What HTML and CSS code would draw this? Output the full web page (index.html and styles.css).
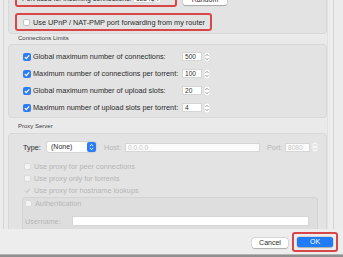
FILE: index.html
```html
<!DOCTYPE html>
<html lang="en">
<head>
    <meta charset="UTF-8">
    <meta name="viewport" content="width=device-width, initial-scale=1.0">
    <title>Preferences - Connection</title>
    <link rel="stylesheet" href="styles.css">
</head>
<body>
    <div class="window">
        <div class="scroll">
            <div class="content">
                <div class="group group-top">
                    <div class="port-row">
                        <div class="mark port-mark">
                            <span class="port-label">Port used for incoming connections:</span>
                            <span class="field port-field">12345</span>
                            <svg class="spin" viewBox="0 0 6 10"><rect x="0.25" y="0.25" width="5.5" height="9.5" rx="2" fill="#fff" stroke="#d2d2d2" stroke-width="0.5"/><path d="M1.6 3.8 L3 2.4 L4.4 3.8 M1.6 6.2 L3 7.6 L4.4 6.2" fill="none" stroke="#6f6f6f" stroke-width="0.8"/></svg>
                        </div>
                        <button class="btn random">Random</button>
                    </div>
                    <div class="mark upnp-mark">
                        <span class="check"></span>
                        <span class="text">Use UPnP / NAT-PMP port forwarding from my router</span>
                    </div>
                </div>

                <div class="section-title limits-title">Connections Limits</div>
                <div class="group limits">
                    <div class="row">
                        <span class="check on"><svg viewBox="0 0 7 7"><path d="M1.6 3.6 L2.9 4.9 L5.4 2" fill="none" stroke="#fff" stroke-width="1.1"/></svg></span>
                        <span class="text limit-label">Global maximum number of connections:</span>
                        <span class="field">500</span>
                        <svg class="spin" viewBox="0 0 6 10"><rect x="0.25" y="0.25" width="5.5" height="9.5" rx="2" fill="#fff" stroke="#d2d2d2" stroke-width="0.5"/><path d="M1.6 3.8 L3 2.4 L4.4 3.8 M1.6 6.2 L3 7.6 L4.4 6.2" fill="none" stroke="#6f6f6f" stroke-width="0.8"/></svg>
                    </div>
                    <div class="row">
                        <span class="check on"><svg viewBox="0 0 7 7"><path d="M1.6 3.6 L2.9 4.9 L5.4 2" fill="none" stroke="#fff" stroke-width="1.1"/></svg></span>
                        <span class="text limit-label">Maximum number of connections per torrent:</span>
                        <span class="field">100</span>
                        <svg class="spin" viewBox="0 0 6 10"><rect x="0.25" y="0.25" width="5.5" height="9.5" rx="2" fill="#fff" stroke="#d2d2d2" stroke-width="0.5"/><path d="M1.6 3.8 L3 2.4 L4.4 3.8 M1.6 6.2 L3 7.6 L4.4 6.2" fill="none" stroke="#6f6f6f" stroke-width="0.8"/></svg>
                    </div>
                    <div class="row">
                        <span class="check on"><svg viewBox="0 0 7 7"><path d="M1.6 3.6 L2.9 4.9 L5.4 2" fill="none" stroke="#fff" stroke-width="1.1"/></svg></span>
                        <span class="text limit-label">Global maximum number of upload slots:</span>
                        <span class="field">20</span>
                        <svg class="spin" viewBox="0 0 6 10"><rect x="0.25" y="0.25" width="5.5" height="9.5" rx="2" fill="#fff" stroke="#d2d2d2" stroke-width="0.5"/><path d="M1.6 3.8 L3 2.4 L4.4 3.8 M1.6 6.2 L3 7.6 L4.4 6.2" fill="none" stroke="#6f6f6f" stroke-width="0.8"/></svg>
                    </div>
                    <div class="row">
                        <span class="check on"><svg viewBox="0 0 7 7"><path d="M1.6 3.6 L2.9 4.9 L5.4 2" fill="none" stroke="#fff" stroke-width="1.1"/></svg></span>
                        <span class="text limit-label">Maximum number of upload slots per torrent:</span>
                        <span class="field">4</span>
                        <svg class="spin" viewBox="0 0 6 10"><rect x="0.25" y="0.25" width="5.5" height="9.5" rx="2" fill="#fff" stroke="#d2d2d2" stroke-width="0.5"/><path d="M1.6 3.8 L3 2.4 L4.4 3.8 M1.6 6.2 L3 7.6 L4.4 6.2" fill="none" stroke="#6f6f6f" stroke-width="0.8"/></svg>
                    </div>
                </div>

                <div class="section-title proxy-title">Proxy Server</div>
                <div class="group proxy">
                    <div class="type-row">
                        <span class="text type-label">Type:</span>
                        <span class="combo">
                            <span class="combo-text">(None)</span>
                            <svg class="combo-btn" viewBox="0 0 9 10"><rect width="9" height="10" rx="2" fill="#2f7df5"/><path d="M2.9 4 L4.5 2.5 L6.1 4 M2.9 6 L4.5 7.5 L6.1 6" fill="none" stroke="#fff" stroke-width="0.9"/></svg>
                        </span>
                        <span class="text dim host-label">Host:</span>
                        <span class="field dim host-field">0.0.0.0</span>
                        <span class="text dim port-label2">Port:</span>
                        <span class="field dim port-field2">8080</span>
                        <svg class="spin" viewBox="0 0 6 10"><rect x="0.25" y="0.25" width="5.5" height="9.5" rx="2" fill="#f6f6f6" stroke="#dcdcdc" stroke-width="0.5"/><path d="M1.6 3.8 L3 2.4 L4.4 3.8 M1.6 6.2 L3 7.6 L4.4 6.2" fill="none" stroke="#c4c4c4" stroke-width="0.8"/></svg>
                    </div>
                    <div class="opt first">
                        <span class="check off"></span>
                        <span class="text dim">Use proxy for peer connections</span>
                    </div>
                    <div class="opt">
                        <span class="check off"></span>
                        <span class="text dim">Use proxy only for torrents</span>
                    </div>
                    <div class="opt">
                        <svg class="tick" viewBox="0 0 7 7"><path d="M1.2 3.7 L2.8 5.3 L5.9 1.6" fill="none" stroke="#b9b9b9" stroke-width="0.9"/></svg>
                        <span class="text dim">Use proxy for hostname lookups</span>
                    </div>
                    <div class="auth">
                        <div class="auth-title">
                            <span class="check off"></span>
                            <span class="text dim">Authentication</span>
                        </div>
                        <div class="user-row">
                            <span class="text dim user-label">Username:</span>
                            <span class="field user-field"></span>
                        </div>
                    </div>
                </div>
            </div>
            <div class="scrollbar"></div>
        </div>

        <div class="footer">
            <button class="btn cancel">Cancel</button>
            <div class="mark ok-mark">
                <button class="btn ok">OK</button>
            </div>
        </div>
        <div class="edge"></div>
    </div>
</body>
</html>
```

FILE: styles.css
```css
body {
    margin: 0;
    width: 343px;
    height: 257px;
    overflow: hidden;
    background-color: #ececec;
    font-family: "Liberation Sans", Arial, sans-serif;
    color: #2b2b2b;
}
.window {
    height: 257px;
    display: flex;
    flex-direction: column;
}
.scroll {
    height: 229px;
    margin: 0 9px 0 3px;
    display: flex;
    border-left: 1px solid #d4d4d4;
    border-right: 1px solid #d4d4d4;
    box-sizing: border-box;
    overflow: hidden;
    background: #eaeaea;
}
.content {
    width: 323px;
    padding-left: 4px;
    box-sizing: border-box;
    margin-top: -20px;
}
.scrollbar {
    width: 6px;
    border-left: 1px solid #e2e2e2;
    background: #ededed;
}
.group {
    width: 319px;
    box-sizing: border-box;
    background: #e3e3e3;
    border: 1px solid #d8d8d8;
    border-radius: 4px;
}
.text {
    font-size: 7.3px;
    white-space: nowrap;
}
.dim {
    color: #b6b6b6;
}
.mark {
    box-sizing: border-box;
    border: 2px solid #d8464a;
    border-radius: 3px;
    display: flex;
    align-items: center;
}

/* top group */
.group-top {
    padding: 8px 0 3px 6px;
    height: 54px;
}
.port-row {
    display: flex;
    align-items: center;
}
.port-mark {
    width: 162px;
    height: 18px;
    padding-left: 5px;
}
.port-label {
    width: 111px;
    font-size: 6.9px;
    white-space: nowrap;
}
.port-field {
    width: 27px;
}
.random {
    margin: 4px 0 0 6px;
    width: 44px;
    height: 10px;
}
.upnp-mark {
    margin-top: 6px;
    width: 197px;
    height: 18px;
    padding-left: 6px;
}

.check {
    width: 7px;
    height: 7px;
    box-sizing: border-box;
    border-radius: 2px;
    margin-right: 3px;
    background: #fff;
    border: 0.5px solid #c4c4c4;
    flex: none;
}
.check svg {
    display: block;
    width: 7px;
    height: 7px;
}
.check.on {
    width: 8px;
    height: 8px;
    margin-right: 2px;
    background: #2f7df5;
    border: none;
}
.check.on svg {
    width: 8px;
    height: 8px;
}
.check.off {
    background: #f3f3f3;
    border-color: #dadada;
}

.field {
    width: 20px;
    height: 9px;
    box-sizing: border-box;
    background: #fff;
    border: 0.5px solid #d6d6d6;
    font-size: 6.6px;
    line-height: 8px;
    padding-left: 2px;
    color: #333;
    flex: none;
}
.field.dim {
    color: #c8c8c8;
    background: #fbfbfb;
}
.spin {
    width: 6px;
    height: 10px;
    margin-left: 2px;
    flex: none;
}

.section-title {
    font-size: 6px;
    line-height: 9px;
    padding-left: 10px;
    color: #3a3a3a;
}
.limits-title {
    padding-bottom: 1px;
}
.proxy-title {
    padding-top: 4px;
    padding-bottom: 2px;
}

.limits {
    padding: 3px 0 1px 14px;
}
.limits .row {
    height: 17px;
    display: flex;
    align-items: center;
}
.limit-label {
    width: 149px;
}

/* proxy */
.proxy {
    height: 100px;
    padding: 8px 0 0 14px;
}
.type-row {
    height: 10px;
    display: flex;
    align-items: center;
}
.type-label {
    width: 24px;
}
.combo {
    width: 49px;
    height: 10px;
    display: flex;
    background: #fff;
    border-radius: 2px;
    box-shadow: 0 0 0 0.5px rgba(0, 0, 0, 0.12);
}
.combo-text {
    flex: 1;
    font-size: 7px;
    line-height: 10px;
    padding-left: 4px;
}
.combo-btn {
    width: 9px;
    height: 10px;
}
.host-label {
    margin-left: 8px;
    width: 21px;
}
.host-field {
    width: 135px;
}
.port-label2 {
    margin-left: 7px;
    width: 18px;
}
.port-field2 {
    width: 25px;
}
.opt {
    height: 12px;
    display: flex;
    align-items: center;
    padding-left: 1px;
}
.opt.first {
    margin-top: 8px;
}
.tick {
    width: 7px;
    height: 7px;
    margin-right: 3px;
}
.auth {
    margin: 1px 0 0 -1px;
    width: 296px;
    height: 40px;
    box-sizing: border-box;
    background: #dedede;
    border: 1px solid #d4d4d4;
    border-radius: 3px;
    padding-left: 2px;
}
.auth-title {
    height: 11px;
    display: flex;
    align-items: center;
}
.user-row {
    margin-top: 7px;
    height: 10px;
    display: flex;
    align-items: center;
}
.user-label {
    width: 47px;
}
.user-field {
    width: 237px;
    height: 10px;
}

/* buttons */
.btn {
    padding: 0;
    border: none;
    font-family: "Liberation Sans", Arial, sans-serif;
    font-size: 7px;
    line-height: 10px;
    height: 10px;
    border-radius: 2.5px;
    background: #fff;
    color: #2a2a2a;
    box-shadow: 0 0 0 0.5px rgba(0, 0, 0, 0.15), 0 0.5px 1px rgba(0, 0, 0, 0.2);
}
.footer {
    height: 25px;
    box-sizing: border-box;
    padding: 3px 5px 0 0;
    display: flex;
    justify-content: flex-end;
    align-items: flex-start;
    background: #ededed;
}
.cancel {
    width: 36px;
    margin: 6px 4px 0 0;
}
.ok-mark {
    width: 46px;
    height: 20px;
    padding: 3px;
}
.ok {
    width: 36px;
    background: #1f7cf6;
    color: #fff;
}
.edge {
    height: 3px;
    background: #8f8f8f;
    border-top: 1px solid #b5b5b5;
    box-sizing: border-box;
}
```
